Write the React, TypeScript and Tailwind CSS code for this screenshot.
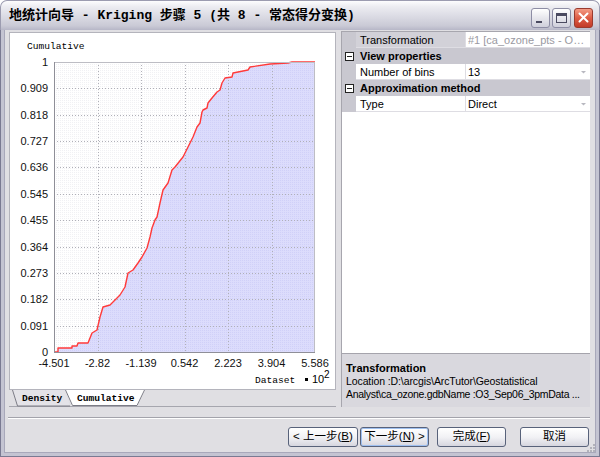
import React from 'react';

const SANS = '"Liberation Sans", "Noto Sans CJK SC", sans-serif';
const MONO = '"Liberation Mono", "Noto Sans CJK SC", monospace';

// cumulative curve traced in window pixel coords
const curve: [number, number][] = [
  [54, 352], [58, 352], [58, 348], [72, 348], [72, 346], [77, 346], [78, 343], [88, 343],
  [92, 333], [97, 330], [100, 317], [103, 307], [110, 305], [115, 300], [120, 295], [125, 287],
  [128, 273], [133, 270], [138, 263], [142, 257], [147, 248], [150, 237], [152, 228], [155, 220],
  [157, 217], [160, 203], [163, 190], [168, 183], [172, 170], [175, 167], [183, 157], [188, 147],
  [193, 137], [197, 127], [200, 123], [202, 112], [203, 110], [207, 108], [208, 103], [212, 98],
  [217, 92], [220, 90], [222, 83], [225, 78], [232, 77], [233, 73], [238, 72], [248, 70],
  [250, 67], [270, 64], [288, 63], [292, 62], [315, 62],
];

const yLabels = ['1', '0.909', '0.818', '0.727', '0.636', '0.545', '0.455', '0.364', '0.273', '0.182', '0.091', '0'];
const xLabels = ['-4.501', '-2.82', '-1.139', '0.542', '2.223', '3.904', '5.586'];

function Chart() {
  const top = 62;
  const bottom = 352;
  const left = 54;
  const right = 315;
  const yStep = (bottom - top) / 11;
  const xStep = (right - left) / 6;
  const line = curve.map((p) => p.join(',')).join(' ');
  const area = `${left},${bottom} ${line} ${right},${bottom}`;

  return (
    <svg width={325} height={356} viewBox="10 33 325 356" className="block">
      <defs>
        <pattern id="dots" width="2" height="2" patternUnits="userSpaceOnUse">
          <rect width="2" height="2" fill="#ffffff" />
          <rect width="1" height="1" fill="#f1f1f4" />
        </pattern>
        <pattern id="blue" width="2" height="2" patternUnits="userSpaceOnUse">
          <rect width="2" height="2" fill="#dcdcfc" />
          <rect width="1" height="1" fill="#d0d0f8" />
        </pattern>
      </defs>

      <text x={27} y={49} fontFamily={MONO} fontSize={9.6} fill="#000">Cumulative</text>

      <rect x={left} y={top} width={right - left} height={bottom - top} fill="url(#dots)" />
      <polygon points={area} fill="url(#blue)" />

      {yLabels.slice(1, 11).map((_, i) => {
        const y = Math.round(top + (i + 1) * yStep) + 0.5;
        return <line key={'h' + i} x1={left} x2={right} y1={y} y2={y} stroke="#b0b0b8" strokeDasharray="1 2" />;
      })}
      {xLabels.slice(1, 6).map((_, i) => {
        const x = Math.round(left + (i + 1) * xStep) + 0.5;
        return <line key={'v' + i} x1={x} x2={x} y1={top} y2={bottom} stroke="#b0b0b8" strokeDasharray="1 2" />;
      })}

      <polyline points={line} fill="none" stroke="#ff3a3a" strokeWidth={1.4} strokeLinejoin="round" />

      <rect x={left + 0.5} y={top + 0.5} width={right - left - 1} height={bottom - top} fill="none" stroke="#bdbdc4" />
      <line x1={left + 0.5} x2={left + 0.5} y1={top} y2={bottom + 1} stroke="#8f8f98" />
      <line x1={left} x2={right} y1={bottom + 0.5} y2={bottom + 0.5} stroke="#8f8f98" />

      {yLabels.map((l, i) => (
        <text key={l} x={48} y={top + i * yStep + 4} textAnchor="end" fontFamily={SANS} fontSize={11} fill="#111">
          {l}
        </text>
      ))}
      {xLabels.map((l, i) => (
        <text key={l} x={left + i * xStep} y={367} textAnchor="middle" fontFamily={SANS} fontSize={11} fill="#111">
          {l}
        </text>
      ))}

      <text x={255} y={383} fontFamily={MONO} fontSize={9.6} fill="#000">Dataset</text>
      <rect x={305} y={378} width={3} height={3} fill="#000" />
      <text x={312} y={383} fontFamily={SANS} fontSize={11} fill="#000">10</text>
      <text x={324} y={378} fontFamily={SANS} fontSize={10} fill="#000">2</text>
    </svg>
  );
}

function TabStrip() {
  return (
    <div className="relative h-[17px]">
      <svg width={327} height={17} viewBox="9 390 327 17" className="absolute inset-0">
        <line x1={9} x2={336} y1={406.5} y2={406.5} stroke="#a6a6ae" />
        <polygon points="12,390 17,406 70,406 65,390" fill="#e4e3e8" />
        <polyline points="12.5,390 17.5,406 70,406" fill="none" stroke="#7c7c86" />
        <polygon points="65,390 72,406 137,406 145,390" fill="#ffffff" />
        <polyline points="65.5,390 72.5,405.5 137,405.5 144.5,390" fill="none" stroke="#7c7c86" />
      </svg>
      <span
        className="absolute left-[13px] top-[3px] text-[9.6px] leading-[11px] font-bold text-black"
        style={{ fontFamily: MONO }}
      >
        Density
      </span>
      <span
        className="absolute left-[68px] top-[3px] text-[9.6px] leading-[11px] font-bold text-black"
        style={{ fontFamily: MONO }}
      >
        Cumulative
      </span>
    </div>
  );
}

function Toggle() {
  return (
    <div className="w-[9px] h-[9px] border border-[#222] bg-white flex items-center justify-center">
      <div className="w-[5px] h-[1px] bg-[#222]" />
    </div>
  );
}

function PropRow({ name, value, gray, dim }: { name: string; value: string; gray?: boolean; dim?: boolean }) {
  return (
    <div className="flex h-[16px] text-[11px] leading-[16px]">
      <div className="w-[14px] bg-[#c9c8d0]" />
      <div
        className={`w-[109px] pl-[4px] border-b border-[#dedde3] whitespace-nowrap overflow-hidden ${
          gray ? 'bg-[#d2d1d8]' : 'bg-white'
        }`}
      >
        {name}
      </div>
      <div className="flex-1 flex border-l border-b border-[#dedde3] bg-white pl-[2px]">
        <span className={`flex-1 whitespace-nowrap overflow-hidden ${dim ? 'text-[#9a9aa2]' : 'text-black'}`}>{value}</span>
        {!dim && (
          <svg width={12} height={16} viewBox="0 0 12 16" className="shrink-0">
            <path d="M3 7 L8 7 L5.5 9.5 Z" fill="#b8b8c0" />
          </svg>
        )}
      </div>
    </div>
  );
}

function Category({ label }: { label: string }) {
  return (
    <div className="flex items-center h-[16px] bg-[#c9c8d0] text-[11px] font-bold">
      <div className="w-[14px] flex justify-center">
        <Toggle />
      </div>
      <span className="pl-[4px]">{label}</span>
    </div>
  );
}

function WizButton({ children, focused }: { children: React.ReactNode; focused?: boolean }) {
  return (
    <div
      className={`h-[20px] rounded-[3px] border border-[#58627a] bg-linear-to-b from-white via-[#f2f2f5] to-[#d6d6df] flex items-center justify-center text-[11.5px] text-black ${
        focused ? 'shadow-[inset_0_0_0_1px_#9fc0f0]' : ''
      }`}
    >
      {children}
    </div>
  );
}

export default function App() {
  return (
    <div
      className="w-[600px] h-[457px] flex flex-col bg-[#c4c4d2] rounded-t-[7px] overflow-hidden"
      style={{ fontFamily: SANS }}
    >
      {/* title bar */}
      <div className="h-[30px] flex items-center pl-[8px] pr-[6px] rounded-t-[7px] border-t border-x border-[#9c9cb0] bg-[linear-gradient(to_bottom,#fdfdfe_0%,#ececf1_20%,#dadae3_55%,#cacad6_85%,#b7b7c7_100%)]">
        <span className="flex-1 text-[13px] font-bold text-black whitespace-nowrap" style={{ fontFamily: MONO }}>
          地统计向导 - Kriging 步骤 5 (共 8 - 常态得分变换)
        </span>
        <div className="flex mt-[4px]">
          <div className="w-[19px] h-[20px] rounded-[3px] border border-[#8d8da5] bg-linear-to-b from-white to-[#cfcfdb] flex items-end pl-[4px] pb-[4px]">
            <div className="w-[6px] h-[2px] bg-[#4a4a60]" />
          </div>
          <div className="ml-[2px] w-[19px] h-[20px] rounded-[3px] border border-[#8d8da5] bg-linear-to-b from-white to-[#cfcfdb] flex items-center justify-center">
            <div className="w-[11px] h-[10px] border border-[#4a4a60] border-t-[3px]" />
          </div>
          <div className="ml-[3px] w-[19px] h-[20px] rounded-[3px] border border-[#9a3a2e] bg-linear-to-b from-[#f29a84] via-[#de5b45] to-[#c23a28] flex items-center justify-center">
            <svg width={11} height={11} viewBox="0 0 11 11">
              <path d="M1.5 1.5 L9.5 9.5 M9.5 1.5 L1.5 9.5" stroke="#ffffff" strokeWidth={2} strokeLinecap="round" />
            </svg>
          </div>
        </div>
      </div>

      {/* body */}
      <div className="flex-1 flex flex-col border-x border-b border-[#7a7a92] px-[3px] pb-[3px]">
        <div className="relative flex-1 flex flex-col bg-[#e0dfe3] border-x border-b border-[#a8a8ba]">
          <div className="mt-[1px] h-[376px] flex pl-[3px]">
            {/* left: chart panel */}
            <div className="w-[329px] flex flex-col pl-[1px] pt-[1px]">
              <div className="w-[327px] h-[358px] border border-[#b4b4bc] bg-white">
                <Chart />
              </div>
              <TabStrip />
            </div>

            <div className="w-[4px]" />

            {/* right: property grid */}
            <div className="w-[249px] flex flex-col border-l border-t border-[#a7a6ae]">
              <div className="h-[321px] bg-white flex flex-col">
                <PropRow name="Transformation" value="#1 [ca_ozone_pts - O…" gray dim />
                <Category label="View properties" />
                <PropRow name="Number of bins" value="13" />
                <Category label="Approximation method" />
                <PropRow name="Type" value="Direct" />
              </div>
              <div className="flex-1 bg-[#d9d8de] border-t border-[#a5a4ac] px-[4px] pt-[8px] text-[11px] leading-[13px] text-black">
                <div className="font-bold">Transformation</div>
                <div className="whitespace-nowrap text-[10.5px] tracking-[-0.1px]">
                  Location :D:\arcgis\ArcTutor\Geostatistical
                </div>
                <div className="whitespace-nowrap text-[10.5px] tracking-[-0.3px]">
                  Analyst\ca_ozone.gdbName :O3_Sep06_3pmData ...
                </div>
              </div>
            </div>
          </div>

          {/* separator */}
          <div className="mt-[10px] ml-[3px] mr-[5px] h-[2px] border-t border-[#a3a3ab] border-b border-b-white" />

          {/* buttons */}
          <div className="mt-[8px] flex justify-end pr-[6px]">
            <div className="w-[70px]">
              <WizButton>
                &lt; 上一步(<span className="underline">B</span>)
              </WizButton>
            </div>
            <div className="w-[69px] ml-[2px]">
              <WizButton focused>
                下一步(<span className="underline">N</span>) &gt;
              </WizButton>
            </div>
            <div className="w-[69px] ml-[8px]">
              <WizButton>
                完成(<span className="underline">F</span>)
              </WizButton>
            </div>
            <div className="w-[69px] ml-[14px]">
              <WizButton>取消</WizButton>
            </div>
          </div>

          {/* resize grip */}
          <svg width={10} height={10} viewBox="0 0 10 10" className="absolute right-0 bottom-0">
            {[
              [8, 2], [5, 5], [8, 5], [2, 8], [5, 8], [8, 8],
            ].map(([x, y]) => (
              <rect key={`${x}-${y}`} x={x} y={y} width={2} height={2} fill="#b2b2ba" />
            ))}
          </svg>
        </div>
      </div>
    </div>
  );
}
